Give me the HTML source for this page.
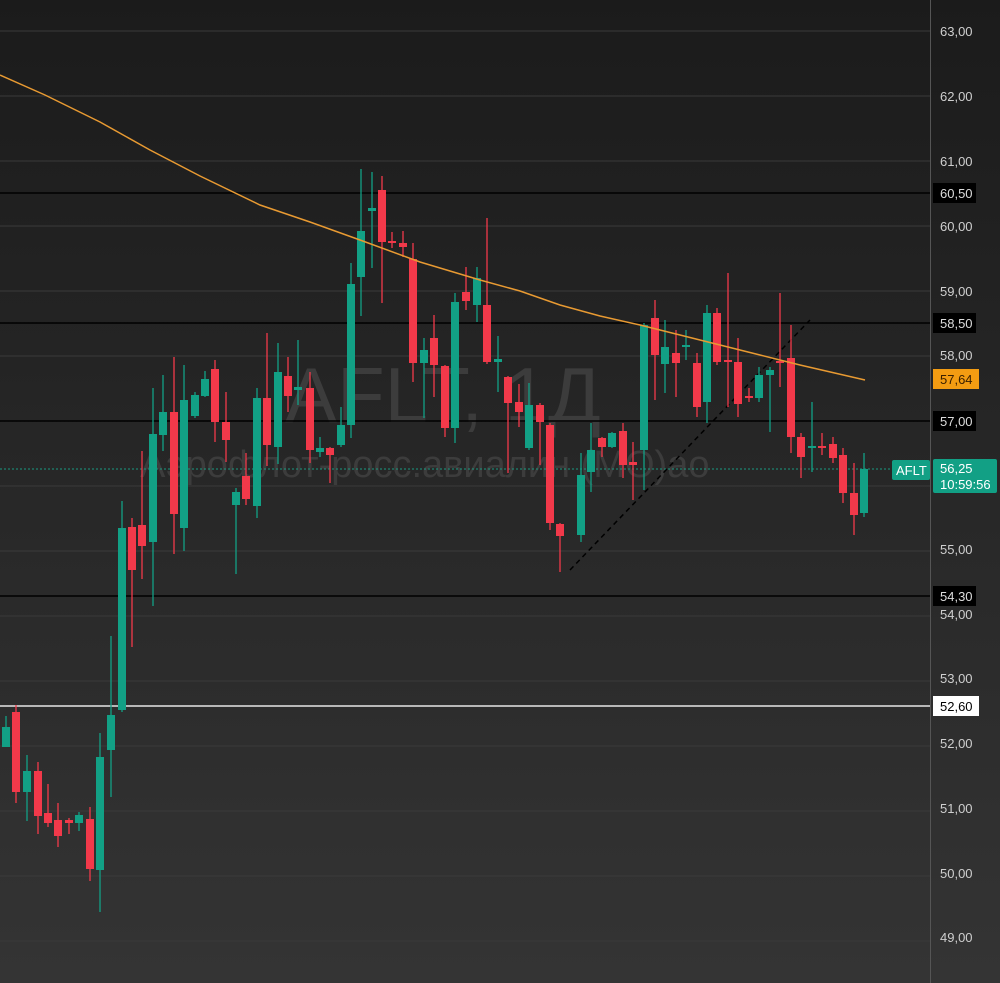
<!DOCTYPE html>
<html><head><meta charset="utf-8"><style>
html,body{margin:0;padding:0;}
body{width:1000px;height:983px;overflow:hidden;background:linear-gradient(#1a1a1a,#333);font-family:"Liberation Sans","DejaVu Sans",sans-serif;}
svg{position:absolute;left:0;top:0}
</style></head><body>
<svg id="s" width="1000" height="983" xmlns="http://www.w3.org/2000/svg">
<defs><linearGradient id="bg" x1="0" y1="0" x2="0" y2="1"><stop offset="0" stop-color="#1b1b1b"/><stop offset="1" stop-color="#343434"/></linearGradient></defs>
<rect width="1000" height="983" fill="url(#bg)"/>
<g id="grid" stroke="#3a3a3a" stroke-width="1"></g>
<text x="285" y="422" font-size="78" fill="#3c3c3c" font-family="Liberation Sans, Noto Sans CJK SC, sans-serif">AFLT, 1Д</text>
<text x="140" y="477" font-size="38" fill="#3c3c3c" font-family="Liberation Sans, Noto Sans CJK SC, sans-serif">Аэрофлот-росс.авиалин (MO)ао</text>
<g stroke="#000" stroke-width="1.5">
<line x1="0" y1="193" x2="930" y2="193"/>
<line x1="0" y1="323" x2="930" y2="323"/>
<line x1="0" y1="421" x2="930" y2="421"/>
<line x1="0" y1="596" x2="930" y2="596"/>
</g>
<line x1="0" y1="706" x2="930" y2="706" stroke="#e6e6e6" stroke-width="1.5"/>
<line x1="0" y1="469" x2="930" y2="469" stroke="#1a9a80" stroke-width="1" stroke-dasharray="2,2"/>
<line x1="570" y1="570" x2="810" y2="320" stroke="#000" stroke-width="1.5" stroke-dasharray="5,4"/>
<g id="c"></g>
<polyline fill="none" stroke="#e89a32" stroke-width="1.5" points="0,75 45,95 100,122 150,150 200,176 260,205 310,222 360,240 420,262 480,280 520,291 560,305 600,316 640,325 700,340 760,355 800,365 865,380"/>
<line x1="930.5" y1="0" x2="930.5" y2="983" stroke="#555" stroke-width="1"/>
<g id="lab" font-size="13" fill="#cfcfcf"></g>
<rect x="933" y="183" width="43" height="20" fill="#000"/><text x="940" y="198" font-size="13" fill="#ddd">60,50</text>
<rect x="933" y="313" width="43" height="20" fill="#000"/><text x="940" y="328" font-size="13" fill="#ddd">58,50</text>
<rect x="933" y="369" width="46" height="20" fill="#f39c12"/><text x="940" y="384" font-size="13" fill="#3a2000">57,64</text>
<rect x="933" y="411" width="43" height="20" fill="#000"/><text x="940" y="426" font-size="13" fill="#ddd">57,00</text>
<rect x="933" y="586" width="43" height="20" fill="#000"/><text x="940" y="601" font-size="13" fill="#ddd">54,30</text>
<rect x="933" y="696" width="46" height="20" fill="#fff"/><text x="940" y="711" font-size="13" fill="#000">52,60</text>
<rect x="892" y="460" width="38" height="20" rx="2" fill="#12a085"/><text x="896" y="475" font-size="13" fill="#fff">AFLT</text>
<rect x="933" y="459" width="64" height="34" rx="2" fill="#12a085"/><text x="940" y="473" font-size="13" fill="#fff">56,25</text><text x="940" y="489" font-size="13" fill="#fff">10:59:56</text>
</svg>
<script>
var ns="http://www.w3.org/2000/svg";
function el(p,t,a){var e=document.createElementNS(ns,t);for(var k in a)e.setAttribute(k,a[k]);p.appendChild(e);return e;}
var grid=document.getElementById('grid'),lab=document.getElementById('lab');
var labs={63:31,62:96,61:161,60:226,59:291,58:355,57:421,56:486,55:549,54:614,53:678,52:743,51:808,50:873,49:937};
for(var p=63;p>=49;p--){var y=31+(63-p)*65;el(grid,'line',{x1:0,y1:y,x2:930,y2:y});
if(p!=56&&p!=57){var t=el(lab,'text',{x:940,y:labs[p]+5});t.textContent=p+',00';}}
var d=[[6,716,747,727,747,'g'],[16,705,803,712,792,'r'],[27,755,821,771,792,'g'],[38,762,834,771,816,'r'],[48,784,827,813,823,'r'],[58,803,847,820,836,'r'],[69,818,834,820,823,'r'],[79,812,831,815,823,'g'],[90,807,881,819,869,'r'],[100,733,912,757,870,'g'],[111,636,797,715,750,'g'],[122,501,712,528,710,'g'],[132,518,647,527,570,'r'],[142,451,579,525,546,'r'],[153,388,606,434,542,'g'],[163,375,451,412,435,'g'],[174,357,554,412,514,'r'],[184,365,551,400,528,'g'],[195,392,418,395,416,'g'],[205,371,397,379,396,'g'],[215,360,442,369,422,'r'],[226,392,462,422,440,'r'],[236,488,574,492,505,'g'],[246,453,505,476,499,'r'],[257,388,518,398,506,'g'],[267,333,466,398,445,'r'],[278,343,464,372,447,'g'],[288,357,412,376,396,'r'],[298,340,405,387,390,'g'],[310,372,463,388,450,'r'],[320,437,457,448,452,'g'],[330,447,483,448,455,'r'],[341,407,447,425,445,'g'],[351,263,438,284,425,'g'],[361,169,316,231,277,'g'],[372,172,268,208,211,'g'],[382,176,303,190,242,'r'],[392,232,248,241,243,'r'],[403,231,257,243,247,'r'],[413,243,382,259,363,'r'],[424,338,418,350,363,'g'],[434,315,397,338,365,'r'],[445,365,437,366,428,'r'],[455,293,443,302,428,'g'],[466,267,310,292,301,'r'],[477,267,322,278,305,'g'],[487,218,364,305,362,'r'],[498,336,392,359,362,'g'],[508,376,473,377,403,'r'],[519,384,427,402,412,'r'],[529,383,450,405,448,'g'],[540,403,465,405,422,'r'],[550,423,530,425,523,'r'],[560,523,572,524,536,'r'],[581,453,542,475,535,'g'],[591,423,492,450,472,'g'],[602,437,457,438,447,'r'],[612,432,448,433,447,'g'],[623,423,478,431,465,'r'],[633,442,500,462,465,'r'],[644,323,490,325,450,'g'],[655,300,400,318,355,'r'],[665,320,393,347,364,'g'],[676,330,397,353,363,'r'],[686,330,360,345,347,'g'],[697,353,417,363,407,'r'],[707,305,423,313,402,'g'],[717,308,365,313,362,'r'],[728,273,407,360,362,'r'],[738,338,417,362,404,'r'],[749,388,402,396,398,'r'],[759,367,402,375,398,'g'],[770,367,432,370,375,'g'],[780,293,387,361,363,'r'],[791,325,453,358,437,'r'],[801,433,478,437,457,'r'],[812,402,472,446,448,'g'],[822,433,455,446,448,'r'],[833,437,463,444,458,'r'],[843,448,503,455,493,'r'],[854,463,535,493,515,'r'],[864,453,517,469,513,'g']];
var c=document.getElementById('c');
d.forEach(function(k){var col=k[5]=='g'?'#12a085':'#f2394a';
el(c,'line',{x1:k[0],y1:k[1],x2:k[0],y2:k[2],stroke:col,'stroke-width':1.3});
el(c,'rect',{x:k[0]-4,y:k[3],width:8,height:Math.max(2,k[4]-k[3]),fill:col});});
</script>
</body></html>
